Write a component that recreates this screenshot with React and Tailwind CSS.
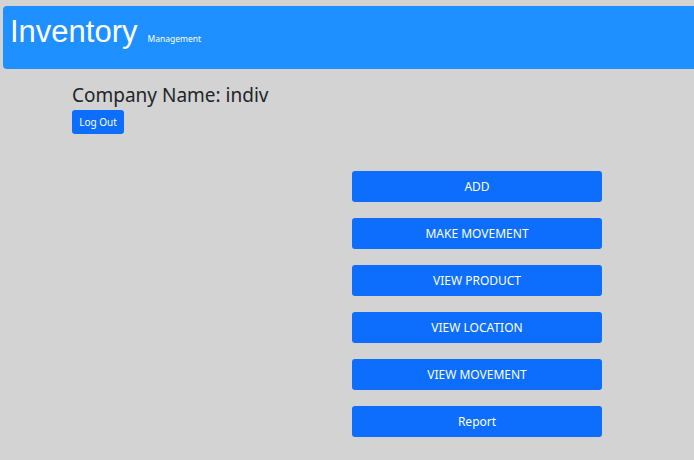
const buttons = ["ADD", "MAKE MOVEMENT", "VIEW PRODUCT", "VIEW LOCATION", "VIEW MOVEMENT", "Report"];

const App = () => {
  return (
    <div
      className="min-h-screen bg-[#d3d3d3] overflow-hidden pt-[6px]"
      style={{ fontFamily: '"Noto Sans", "Open Sans", sans-serif' }}
    >
      <header className="ml-[3px] mr-[-10px] h-[63px] bg-[#1e90ff] rounded-l-[4px] flex items-baseline pt-[10px] pl-[7px] text-white">
        <h1 className="text-[31px] leading-none font-normal font-['Liberation_Sans',sans-serif]">Inventory</h1>
        <span className="text-[8.5px] leading-none ml-[10px]">Management</span>
      </header>

      <div className="pl-[72px] pt-[15px]">
        <h2 className="text-[19px] leading-[22px] text-[#212529]">Company Name: indiv</h2>
        <button className="mt-[4px] h-[24px] w-[52px] rounded-[3px] bg-[#0d6efd] text-white text-[10px]">
          Log Out
        </button>
      </div>

      <div className="ml-[352px] mt-[37px] w-[250px] flex flex-col gap-[16px]">
        {buttons.map((label) => (
          <button
            key={label}
            className="h-[31px] w-full rounded-[3px] bg-[#0d6efd] text-white text-[12px]"
          >
            {label}
          </button>
        ))}
      </div>
    </div>
  );
};

export default App;
